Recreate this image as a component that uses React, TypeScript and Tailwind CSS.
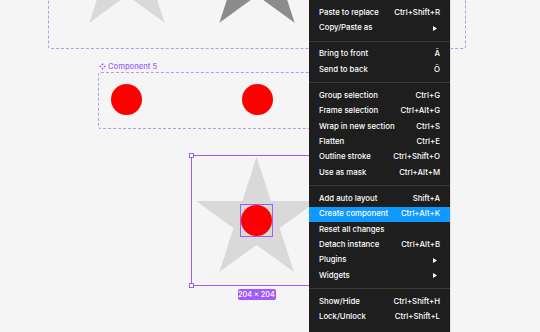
import * as React from 'react';

type MenuItem =
  | { label: string; shortcut?: string; sub?: boolean; active?: boolean }
  | 'sep';

const items: MenuItem[] = [
  { label: 'Paste here' },
  { label: 'Paste to replace', shortcut: 'Ctrl+Shift+R' },
  { label: 'Copy/Paste as', sub: true },
  'sep',
  { label: 'Bring to front', shortcut: 'Ã' },
  { label: 'Send to back', shortcut: 'Õ' },
  'sep',
  { label: 'Group selection', shortcut: 'Ctrl+G' },
  { label: 'Frame selection', shortcut: 'Ctrl+Alt+G' },
  { label: 'Wrap in new section', shortcut: 'Ctrl+S' },
  { label: 'Flatten', shortcut: 'Ctrl+E' },
  { label: 'Outline stroke', shortcut: 'Ctrl+Shift+O' },
  { label: 'Use as mask', shortcut: 'Ctrl+Alt+M' },
  'sep',
  { label: 'Add auto layout', shortcut: 'Shift+A' },
  { label: 'Create component', shortcut: 'Ctrl+Alt+K', active: true },
  { label: 'Reset all changes' },
  { label: 'Detach instance', shortcut: 'Ctrl+Alt+B' },
  { label: 'Plugins', sub: true },
  { label: 'Widgets', sub: true },
  'sep',
  { label: 'Show/Hide', shortcut: 'Ctrl+Shift+H' },
  { label: 'Lock/Unlock', shortcut: 'Ctrl+Shift+L' },
];

// five point star, its box is placed by centre
const Star = ({ cx, cy, r, fill }: { cx: number; cy: number; r: number; fill: string }) => {
  const inner = r * 0.382;
  const pts = Array.from({ length: 10 }, (_, i) => {
    const a = -Math.PI / 2 + (i * Math.PI) / 5;
    const d = i % 2 === 0 ? r : inner;
    return `${(r + d * Math.cos(a)).toFixed(2)},${(r + d * Math.sin(a)).toFixed(2)}`;
  }).join(' ');
  return (
    <svg className="absolute" style={{ left: cx - r, top: cy - r }} width={r * 2} height={r * 2}>
      <polygon points={pts} fill={fill} />
    </svg>
  );
};

const ComponentIcon = () => (
  <svg width="7" height="7" viewBox="0 0 14 14">
    <path d="M7 0.5 9.2 2.7 7 4.9 4.8 2.7Z M7 9.1 9.2 11.3 7 13.5 4.8 11.3Z M2.7 4.8 4.9 7 2.7 9.2 0.5 7Z M11.3 4.8 13.5 7 11.3 9.2 9.1 7Z" fill="#9747ff" />
  </svg>
);

const Arrow = () => (
  <svg width="4" height="5" viewBox="0 0 4 5" className="mr-[3px]">
    <polygon points="0,0 4,2.5 0,5" fill="#ffffff" />
  </svg>
);

const Dot = () => <div className="w-[31px] h-[31px] rounded-full bg-[#ff0000] shrink-0" />;

const ContextMenu = () => (
  <div className="absolute left-[309px] top-0 w-[141px] h-[332px] bg-[#1e1e1e] overflow-hidden shadow-[1px_0_0_#e2e2e2]">
    <div className="flex flex-col mt-[-10.36px]">
      {items.map((it, i) =>
        it === 'sep' ? (
          <div key={i} className="h-[10.9px] flex items-center">
            <div className="h-px w-full bg-[#3a3a3a]" />
          </div>
        ) : (
          <div
            key={i}
            className={`flex items-center justify-between h-[15.36px] px-[10px] text-[7.8px] font-medium leading-none text-white ${it.active ? 'bg-[#0d99ff]' : ''}`}
          >
            <span>{it.label}</span>
            {it.sub ? <Arrow /> : <span>{it.shortcut}</span>}
          </div>
        )
      )}
    </div>
  </div>
);

export default function App() {
  return (
    <div className="relative w-[540px] h-[332px] overflow-hidden bg-[#f5f5f5] font-['Inter','Noto_Sans',sans-serif]">
      {/* top component set, mostly scrolled off */}
      <div className="absolute left-[48px] top-[-60px] w-[418px] h-[109px] border border-dashed border-[#bd98e4] rounded-[3px]" />
      <Star cx={127} cy={-29} r={64} fill="#d9d9d9" />
      <Star cx={257} cy={-29} r={64} fill="#8c8c8c" />

      {/* component 5 set */}
      <div className="absolute left-[98px] top-[63px] flex flex-col gap-[1px]">
        <div className="flex items-center gap-[2px] pl-[1px] text-[7.6px] font-medium leading-none text-[#9d63f5]">
          <ComponentIcon />
          <span>Component 5</span>
        </div>
        <div className="w-[318px] h-[57px] flex items-start gap-[100px] pl-[12px] pt-[11px] border border-dashed border-[#bd98e4] rounded-[3px]">
          <Dot />
          <Dot />
        </div>
      </div>

      {/* selected star */}
      <Star cx={257} cy={220.6} r={63.6} fill="#d9d9d9" />
      <div className="absolute left-[191px] top-[155px] w-[131px] h-[131px] border border-[#9c5ef5] flex items-center justify-center">
        <div className="w-[33px] h-[33px] border border-[#9c5ef5] flex items-center justify-center">
          <Dot />
        </div>
        <div className="absolute left-[-3px] top-[-3px] w-[5px] h-[5px] bg-white border border-[#9c5ef5]" />
        <div className="absolute left-[-3px] bottom-[-3px] w-[5px] h-[5px] bg-white border border-[#9c5ef5]" />
        <div className="absolute left-1/2 top-full mt-[4px] -translate-x-1/2 w-[38px] h-[11px] rounded-[2px] bg-[#a259ff] flex items-center justify-center text-[7.3px] font-medium leading-none text-white">
          204 × 204
        </div>
      </div>

      <ContextMenu />
    </div>
  );
}
